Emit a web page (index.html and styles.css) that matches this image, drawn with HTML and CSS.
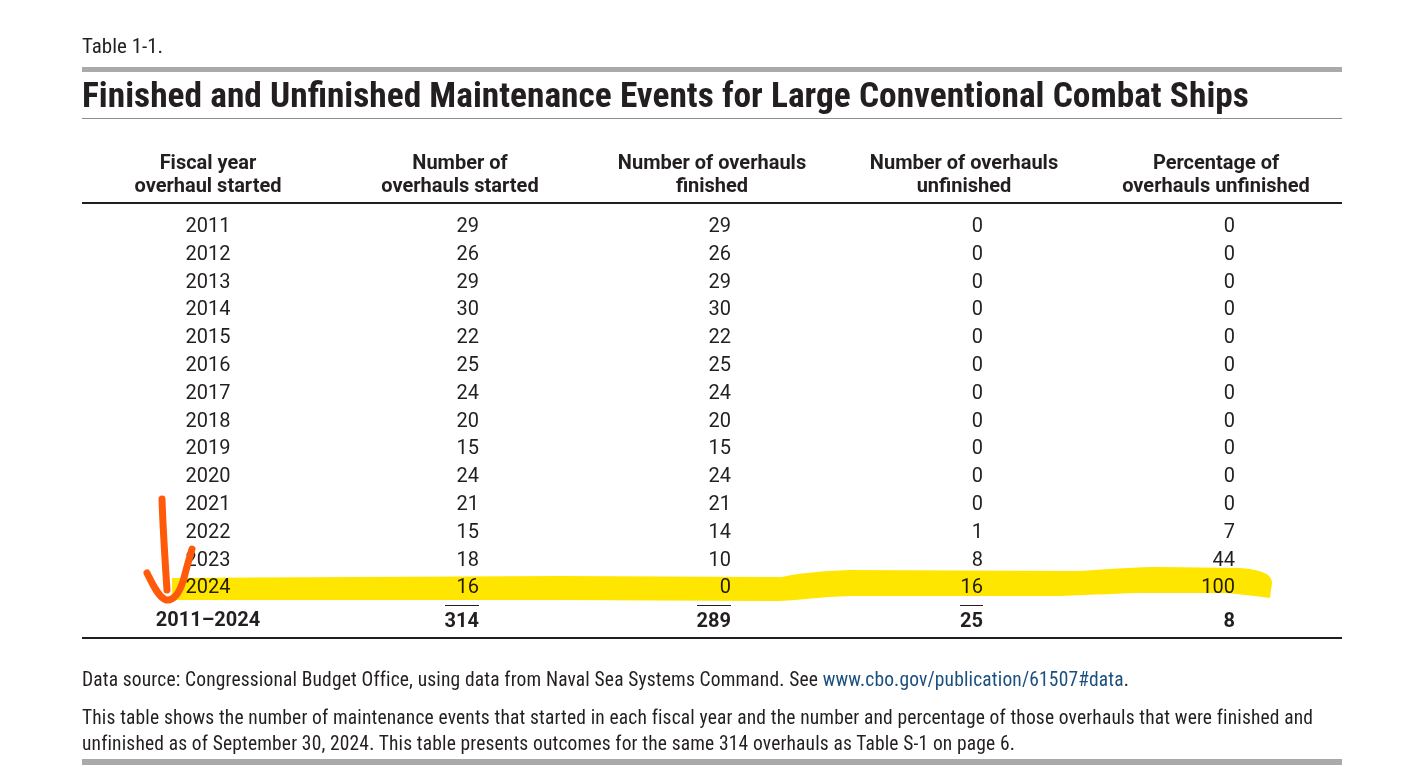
FILE: index.html
```html
<!DOCTYPE html>
<html lang="en">
<head>
<meta charset="utf-8">
<title>Table 1-1</title>
<link rel="stylesheet" href="styles.css">
</head>
<body>
<main class="page">
  <div class="label">Table 1-1.</div>
  <div class="bar"></div>
  <h1 class="title">Finished and Unfinished Maintenance Events for Large Conventional Combat Ships</h1>
  <div class="rule"></div>
  <table class="data">
    <colgroup><col><col><col><col><col></colgroup>
    <thead>
      <tr>
        <th>Fiscal year<br>overhaul started</th>
        <th>Number of<br>overhauls started</th>
        <th>Number of overhauls<br>finished</th>
        <th>Number of overhauls<br>unfinished</th>
        <th>Percentage of<br>overhauls unfinished</th>
      </tr>
    </thead>
    <tbody>
      <tr class="first"><td>2011</td><td>29</td><td>29</td><td>0</td><td>0</td></tr>
      <tr><td>2012</td><td>26</td><td>26</td><td>0</td><td>0</td></tr>
      <tr><td>2013</td><td>29</td><td>29</td><td>0</td><td>0</td></tr>
      <tr><td>2014</td><td>30</td><td>30</td><td>0</td><td>0</td></tr>
      <tr><td>2015</td><td>22</td><td>22</td><td>0</td><td>0</td></tr>
      <tr><td>2016</td><td>25</td><td>25</td><td>0</td><td>0</td></tr>
      <tr><td>2017</td><td>24</td><td>24</td><td>0</td><td>0</td></tr>
      <tr><td>2018</td><td>20</td><td>20</td><td>0</td><td>0</td></tr>
      <tr><td>2019</td><td>15</td><td>15</td><td>0</td><td>0</td></tr>
      <tr><td>2020</td><td>24</td><td>24</td><td>0</td><td>0</td></tr>
      <tr><td>2021</td><td>21</td><td>21</td><td>0</td><td>0</td></tr>
      <tr><td>2022</td><td>15</td><td>14</td><td>1</td><td>7</td></tr>
      <tr><td>2023</td><td>18</td><td>10</td><td>8</td><td>44</td></tr>
      <tr><td>2024</td><td>16</td><td>0</td><td>16</td><td>100</td></tr>
    </tbody>
    <tfoot>
      <tr>
        <td>2011–2024</td>
        <td><span class="sum">314</span></td>
        <td><span class="sum">289</span></td>
        <td><span class="sum">25</span></td>
        <td><span class="sum plain">8</span></td>
      </tr>
    </tfoot>
  </table>
  <p class="source">Data source: Congressional Budget Office, using data from Naval Sea Systems Command. See <a class="link" href="#">www.cbo.gov/publication/61507#data</a>.</p>
  <p class="note">This table shows the number of maintenance events that started in each fiscal year and the number and percentage of those overhauls that were finished and unfinished as of September 30, 2024. This table presents outcomes for the same 314 overhauls as Table S-1 on page 6.</p>
  <div class="bar bottom"></div>
</main>
<svg class="marks" width="1411" height="780" viewBox="0 0 1411 780" aria-hidden="true">
  <path class="hl" d="M172 578 L560 576 L782 577 C800 573 822 571 850 570 L1080 571 C1110 569 1138 567 1160 567 L1240 568 C1262 570 1272 574 1272 583 L1270 598 C1255 596 1240 594 1225 593 L1150 593 C1120 593 1095 595 1060 596 L850 596 C820 597 800 600 780 601 L560 600 L172 600 Z"/>
  <path class="arrow" d="M162 499 C163 530 165 560 167 590"/>
  <path class="arrow" d="M147 573 C152 583 158 597 166 600 C174 601 180 592 184 578 C187 566 190 556 192 549"/>
</svg>
</body>
</html>
```
FILE: styles.css
```css
html, body {
  margin: 0;
  padding: 0;
  background: #ffffff;
}
body {
  font-family: Roboto, "Liberation Sans", sans-serif;
  font-stretch: 88%;
  color: #231f20;
  position: relative;
  width: 1411px;
  height: 780px;
  overflow: hidden;
}
.page {
  width: 1260px;
  padding-left: 82px;
  padding-top: 33px;
}
.label {
  font-size: 21px;
  font-stretch: 75%;
  line-height: 26px;
  height: 26px;
}
.bar {
  height: 5px;
  background: #a9aaac;
  margin-top: 8px;
}
.title {
  margin: 0;
  font-size: 35.4px;
  font-weight: 700;
  font-stretch: 75%;
  line-height: 46px;
  letter-spacing: 0;
  color: #231f20;
}
.rule {
  height: 1px;
  background: #8d8e90;
}
.data {
  width: 1260px;
  border-collapse: collapse;
  table-layout: fixed;
  margin-top: 32px;
  border-bottom: 2px solid #231f20;
}
.data col { width: 252px; }
.data th {
  font-size: 20px;
  font-weight: 700;
  line-height: 23px;
  text-align: center;
  padding: 0 0 5px;
  border-bottom: 2px solid #231f20;
}
.data td {
  font-size: 20px;
  line-height: 27.8px;
  padding: 0 107px 0 0;
  text-align: right;
  white-space: nowrap;
}
.data td:first-child {
  text-align: center;
  padding: 0;
}
.data tbody tr.first td {
  padding-top: 8px;
}
.data tfoot td {
  font-weight: 700;
  line-height: 24px;
  padding-top: 4px;
  padding-bottom: 5px;
}
.sum {
  display: inline-block;
  border-top: 1.5px solid #231f20;
  padding-top: 2px;
}
.sum.plain { border-top-color: transparent; }
.source {
  margin: 28px 0 0;
  font-size: 19.5px;
  font-stretch: 75%;
  letter-spacing: 0.15px;
  line-height: 26px;
}
.link {
  color: #1b4f7e;
  text-decoration: none;
}
.note {
  margin: 12px 0 0;
  font-size: 19.5px;
  font-stretch: 75%;
  letter-spacing: 0.15px;
  line-height: 26px;
}
.bar.bottom {
  margin-top: 2px;
  height: 6px;
}
.marks {
  position: absolute;
  top: 0;
  left: 0;
  pointer-events: none;
}
.hl {
  fill: #ffe600;
  mix-blend-mode: multiply;
}
.arrow {
  fill: none;
  stroke: #ff5a0a;
  stroke-width: 7;
  stroke-linecap: round;
  stroke-linejoin: round;
}
```
